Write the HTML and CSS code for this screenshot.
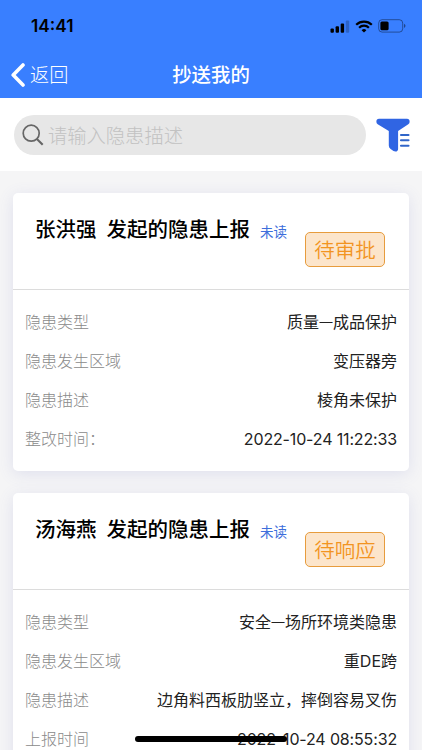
FILE: index.html
```html
<!DOCTYPE html>
<html lang="zh-CN">
<head>
    <meta charset="UTF-8">
    <meta name="viewport" content="width=device-width, initial-scale=1.0">
    <title>抄送我的</title>
    <link rel="stylesheet" href="styles.css">
</head>
<body>
    <header class="header">
        <div class="status-bar">
            <span class="time">14:41</span>
            <div class="status-icons">
                <svg width="20" height="13" viewBox="0 0 20 13">
                    <rect x="0.5" y="8.5" width="3.4" height="4.3" rx="1"/>
                    <rect x="5.6" y="6.2" width="3.4" height="6.6" rx="1"/>
                    <rect x="10.7" y="3.4" width="3.4" height="9.4" rx="1"/>
                    <rect x="15.8" y="0.6" width="3.4" height="12.2" rx="1" opacity="0.22"/>
                </svg>
                <svg width="18" height="13" viewBox="0 0 18 13" fill="none" stroke="#000" stroke-width="2.2">
                    <path d="M1.2 4.7a11.2 11.2 0 0 1 15.6 0"/>
                    <path d="M4.1 7.7a7 7 0 0 1 9.8 0"/>
                    <path d="M9 12.6L6.6 10.2a3.5 3.5 0 0 1 4.8 0z" fill="#000" stroke="none"/>
                </svg>
                <svg width="28" height="14" viewBox="0 0 28 14">
                    <rect x="0.7" y="0.7" width="24" height="12.4" rx="3.4" fill="none" stroke="#000" stroke-opacity="0.4" stroke-width="1"/>
                    <rect x="2.4" y="2.6" width="8.2" height="8.6" rx="1.5"/>
                    <path d="M26 4.8c2 0.8 2 3.4 0 4.2z" opacity="0.45"/>
                </svg>
            </div>
        </div>
        <div class="nav-bar">
            <a class="back">
                <svg width="14" height="24" viewBox="0 0 14 24" fill="none" stroke="#fff" stroke-width="3.6" stroke-linecap="round" stroke-linejoin="round">
                    <path d="M12 2L2.2 12L12 22"/>
                </svg>
                <span>返回</span>
            </a>
            <h1>抄送我的</h1>
        </div>
    </header>

    <div class="search-bar">
        <div class="search-box">
            <svg width="22" height="22" viewBox="0 0 22 22" fill="none" stroke="#666" stroke-width="1.7">
                <circle cx="9.2" cy="9.2" r="8"/>
                <path d="M14.9 14.9L20.7 20.7" stroke-width="2.1"/>
            </svg>
            <span>请输入隐患描述</span>
        </div>
        <svg class="filter" width="34" height="34" viewBox="0 0 34 34" fill="#3065e3">
            <path d="M3 0.8H31Q33.6 0.8 33.6 3.4V4Q33.6 5.4 32.3 6.3L22.1 13V30.8Q22.1 33.6 19.4 33.6Q18 33.6 14.6 30.9Q12.8 29.6 12.8 27.5V13L1.7 6.3Q0.4 5.4 0.4 4V3.4Q0.4 0.8 3 0.8Z"/>
            <path d="M25 17H32.5M25 22.3H32.5M25 27.8H32.5" stroke="#3065c9" stroke-width="2.1" stroke-linecap="round"/>
        </svg>
    </div>

    <main class="list">
        <section class="card">
            <div class="card-head">
                <h2><span>张洪强</span><span>发起的隐患上报</span></h2>
                <span class="unread">未读</span>
                <span class="tag">待审批</span>
            </div>
            <div class="card-body">
                <div class="row"><span class="label">隐患类型</span><span class="value">质量<i class="dash">—</i>成品保护</span></div>
                <div class="row"><span class="label">隐患发生区域</span><span class="value">变压器旁</span></div>
                <div class="row"><span class="label">隐患描述</span><span class="value">棱角未保护</span></div>
                <div class="row"><span class="label">整改时间：</span><span class="value date">2022-10-24 11:22:33</span></div>
            </div>
        </section>
        <section class="card">
            <div class="card-head">
                <h2><span>汤海燕</span><span>发起的隐患上报</span></h2>
                <span class="unread">未读</span>
                <span class="tag">待响应</span>
            </div>
            <div class="card-body">
                <div class="row"><span class="label">隐患类型</span><span class="value">安全<i class="dash">—</i>场所环境类隐患</span></div>
                <div class="row"><span class="label">隐患发生区域</span><span class="value">重DE跨</span></div>
                <div class="row"><span class="label">隐患描述</span><span class="value">边角料西板肋竖立，摔倒容易叉伤</span></div>
                <div class="row"><span class="label">上报时间</span><span class="value date">2022-10-24 08:55:32</span></div>
            </div>
        </section>
    </main>
    <div class="home-indicator"></div>
</body>
</html>
```

FILE: styles.css
```css
* {
    box-sizing: border-box;
}
body {
    margin: 0;
    height: 750px;
    overflow: hidden;
    background: #f5f5f6;
    font-family: Inter, "Noto Sans CJK SC", sans-serif;
    color: #222;
}
svg {
    display: block;
    flex-shrink: 0;
}
.header {
    height: 98px;
    background: #397fff;
}
.status-bar {
    display: flex;
    justify-content: space-between;
    align-items: center;
    height: 52px;
    padding: 0 16px 0 31px;
}
.time {
    font-size: 17.3px;
    font-weight: 600;
    line-height: 20px;
    color: #000;
}
.status-icons {
    display: flex;
    align-items: center;
    gap: 5px;
}
.nav-bar {
    display: grid;
    grid-template-columns: 1fr auto 1fr;
    align-items: center;
    height: 45px;
    padding: 0 11px;
    color: #fff;
}
.back {
    display: flex;
    align-items: center;
    gap: 5px;
    font-size: 19.2px;
    font-weight: 300;
    line-height: 28px;
}
.nav-bar h1 {
    margin: 0;
    padding-top: 1px;
    font-size: 19.4px;
    font-weight: 500;
    line-height: 28px;
}
.search-bar {
    display: flex;
    justify-content: space-between;
    align-items: center;
    height: 73px;
    padding: 0 12px 0 14px;
    background: #fff;
}
.search-box {
    display: flex;
    align-items: center;
    gap: 4px;
    width: 352px;
    height: 40px;
    padding: 0 8px;
    border-radius: 20px;
    background: #e7e7e7;
    color: #c2c2c2;
    font-size: 19.3px;
    font-weight: 300;
    line-height: 28px;
}
.search-box span {
    padding-top: 2px;
}
.list {
    display: flex;
    flex-direction: column;
    gap: 22px;
    padding: 22px 13px 0;
}
.card {
    flex-shrink: 0;
    height: 278px;
    border-radius: 5px;
    background: #fff;
    box-shadow: 0 3px 16px rgba(90, 100, 190, 0.14);
}
.card-head {
    display: flex;
    align-items: flex-start;
    height: 97px;
    padding: 22px 24px 0 22px;
    border-bottom: 1px solid #dcdcdc;
}
.card-head h2 {
    display: flex;
    gap: 10px;
    margin: 0;
    font-size: 20.5px;
    font-weight: 500;
    line-height: 30px;
    color: #000;
}
.unread {
    margin: 7px 0 0 10px;
    font-size: 13.5px;
    line-height: 20px;
    color: #3d6edb;
}
.tag {
    width: 80px;
    height: 35px;
    margin: 17px 0 0 auto;
    padding-top: 2px;
    border: 1.5px solid #e79c3d;
    border-radius: 5px;
    background: #fce5cb;
    color: #f29422;
    font-size: 20.5px;
    font-weight: 350;
    line-height: 32px;
    text-align: center;
}
.card-body {
    padding: 12.5px 12px 0;
}
.row {
    display: flex;
    justify-content: space-between;
    height: 39.3px;
    font-size: 16px;
    line-height: 39.3px;
}
.label {
    font-weight: 300;
    color: #8a8a8a;
}
.date {
    letter-spacing: -0.15px;
}
.dash {
    display: inline-block;
    width: 14px;
    font-size: 13px;
    font-style: normal;
    text-align: center;
    vertical-align: 1px;
    line-height: 20px;
}
.home-indicator {
    position: fixed;
    left: 135px;
    bottom: 8.5px;
    width: 152px;
    height: 5.5px;
    border-radius: 3px;
    background: #000;
}
```
